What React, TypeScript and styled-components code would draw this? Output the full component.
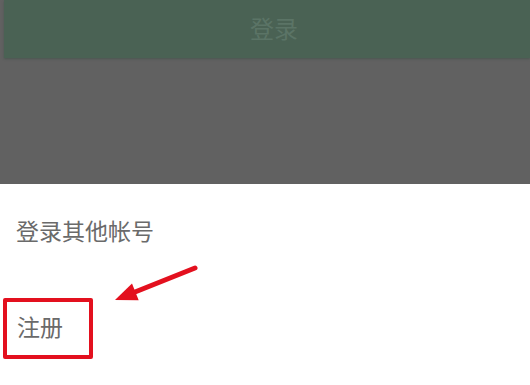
import React from "react";
import styled, { createGlobalStyle } from "styled-components";

const Global = createGlobalStyle`
  html, body { margin: 0; padding: 0; background: #ffffff; }
  body { font-family: "Noto Sans CJK SC", "Noto Sans", sans-serif; }
`;

const Page = styled.div`
  width: 530px;
  height: 385px;
  display: flex;
  flex-direction: column;
  overflow: hidden;
`;

const Dimmed = styled.div`
  height: 184px;
  background: #616161;
  display: flex;
  flex-direction: column;
`;

const LoginButton = styled.div`
  height: 58px;
  margin-left: 4px;
  background: #4a6254;
  display: flex;
  align-items: center;
  justify-content: center;
  color: #5b7466;
  font-size: 24px;
  padding-left: 14px;
  padding-bottom: 4px;
  box-sizing: border-box;
  box-shadow: 0 1px 2px rgba(60, 80, 70, 0.6);
`;

const Sheet = styled.div`
  position: relative;
  flex: 1;
  background: #ffffff;
  display: flex;
  flex-direction: column;
`;

const Item = styled.div`
  height: 97px;
  box-sizing: border-box;
  display: flex;
  align-items: center;
  padding: 0 0 6px 16px;
  font-size: 23px;
  color: #6a6a6a;
`;

const Highlight = styled.div`
  box-sizing: border-box;
  margin: 17px 0 0 3px;
  width: 90px;
  height: 61px;
  border: 4px solid #e3101e;
  border-radius: 2px;
  display: flex;
  align-items: center;
  padding: 0 0 6px 10px;
  font-size: 23px;
  color: #6a6a6a;
`;

const Arrow = styled.svg`
  position: absolute;
  left: 100px;
  top: 75px;
`;

export default function App() {
  return (
    <Page>
      <Global />
      <Dimmed>
        <LoginButton>登录</LoginButton>
      </Dimmed>
      <Sheet>
        <Item>登录其他帐号</Item>
        <Highlight>注册</Highlight>
        <Arrow width="110" height="50" viewBox="0 0 110 50">
          <line x1="95" y1="9" x2="30" y2="35" stroke="#e3101e" strokeWidth="5" strokeLinecap="round" />
          <polygon points="15,41 32,24.4 38.7,41.2" fill="#e3101e" />
        </Arrow>
      </Sheet>
    </Page>
  );
}
